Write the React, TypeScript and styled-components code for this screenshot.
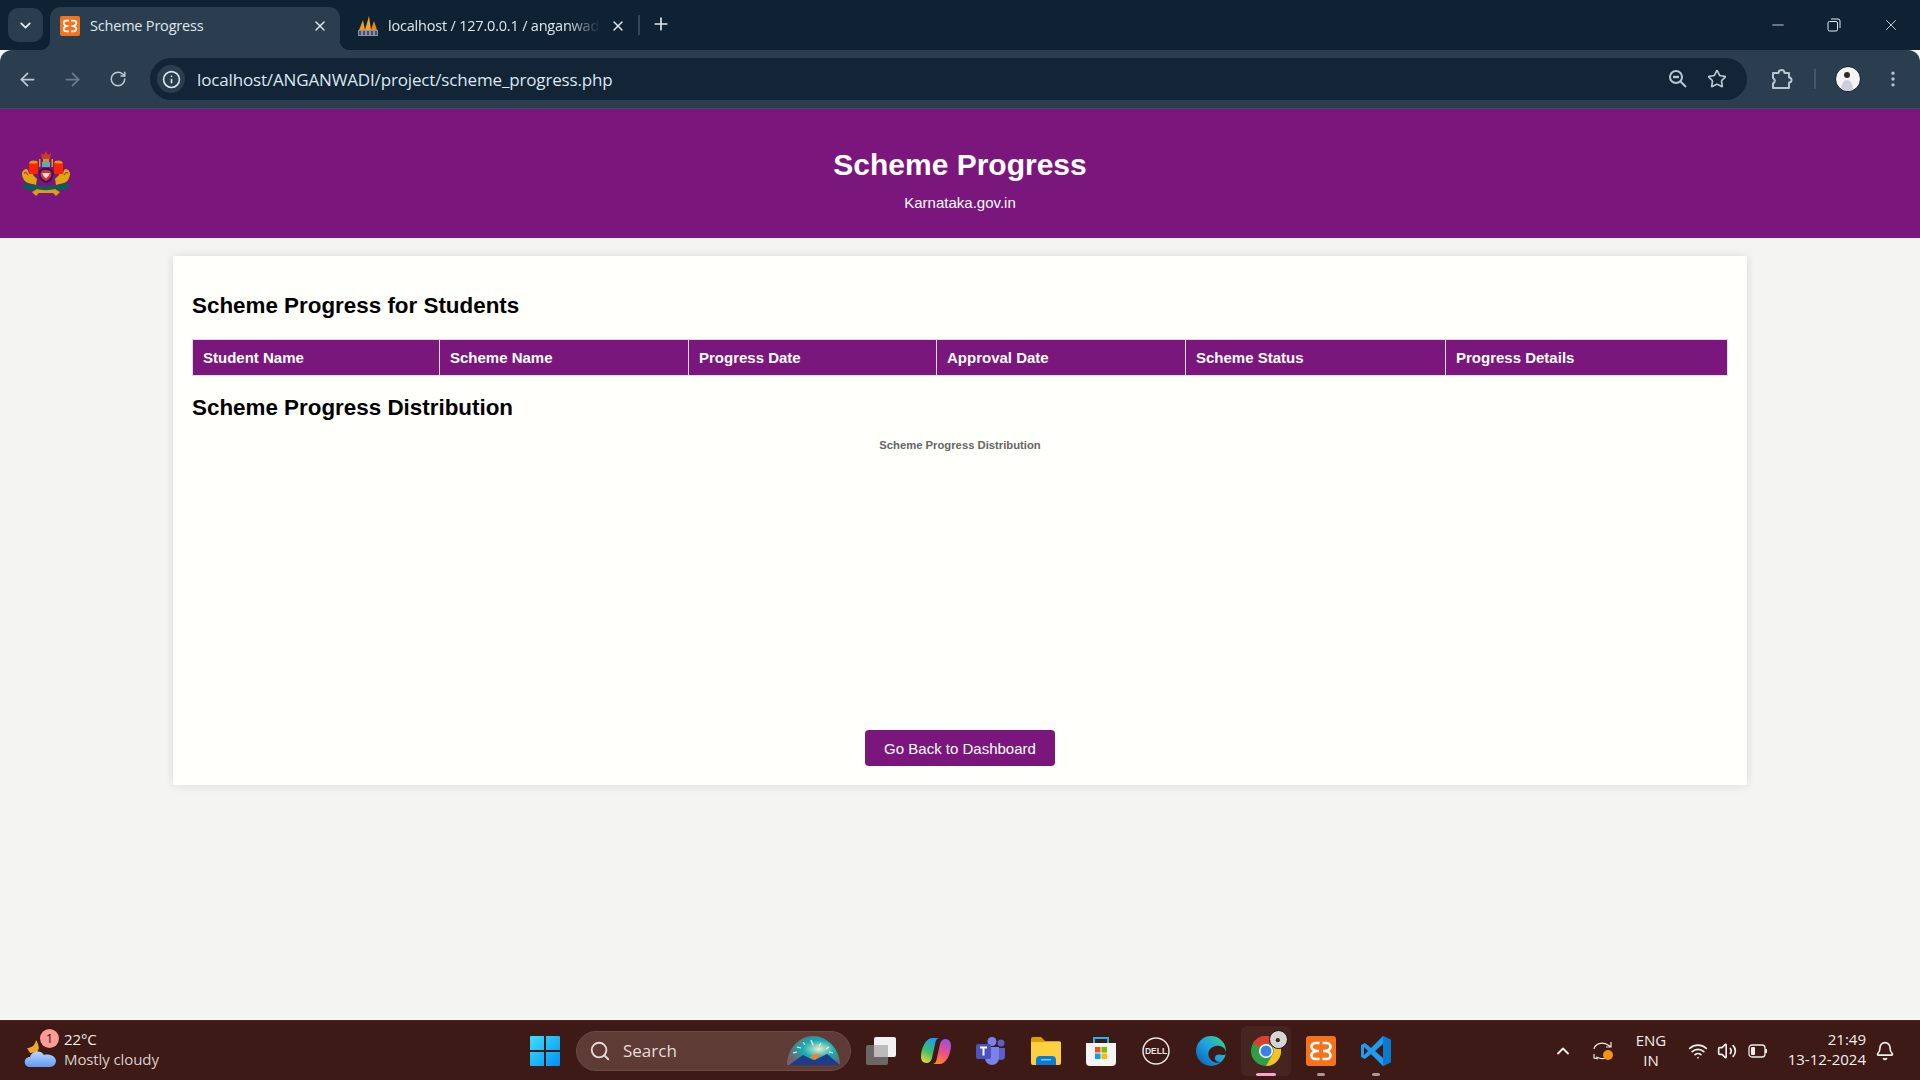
import React from "react";
import styled, { createGlobalStyle } from "styled-components";
import {
  ArrowLeft,
  ArrowRight,
  Bell,
  ChevronDown,
  ChevronUp,
  EllipsisVertical,
  Info,
  Minus,
  Plus,
  RotateCw,
  Search,
  Star,
  Volume2,
  Wifi,
  X,
} from "lucide-react";

const purple = "#7b167c";

const GlobalStyle = createGlobalStyle`
  html, body {
    margin: 0;
    padding: 0;
    height: 100%;
    overflow: hidden;
    background: #f4f4f2;
  }
  #root {
    height: 100%;
  }
`;

const Screen = styled.div`
  width: 1920px;
  height: 1080px;
  display: flex;
  flex-direction: column;
  font-family: "Liberation Sans", Arial, sans-serif;
`;

/* browser chrome */
const TabStrip = styled.div`
  height: 50px;
  flex: none;
  background: #0f2233;
  display: flex;
  align-items: flex-end;
  padding-left: 8px;
  font-family: "Open Sans", "Noto Sans", sans-serif;
  color: #dfe6ec;
`;

const TabMenu = styled.div`
  width: 35px;
  height: 34px;
  margin-bottom: 8px;
  margin-right: 7px;
  border-radius: 10px;
  background: #2b3e4f;
  display: flex;
  align-items: center;
  justify-content: center;
  color: #e3e9ee;
`;

const Tab = styled.div<{ $active?: boolean }>`
  position: relative;
  width: ${(p) => (p.$active ? "290px" : "298px")};
  height: 43px;
  flex: none;
  box-sizing: border-box;
  padding: 0 12px 6px ${(p) => (p.$active ? "10px" : "18px")};
  border-radius: 11px 11px 0 0;
  background: ${(p) => (p.$active ? "#2b3e4f" : "transparent")};
  display: flex;
  align-items: center;
  gap: 10px;
  font-size: 14.5px;
  letter-spacing: -0.2px;
  ${(p) =>
    p.$active &&
    `
    &::after {
      content: "";
      position: absolute;
      right: -10px;
      bottom: 0;
      width: 10px;
      height: 10px;
      background: radial-gradient(circle at 100% 0, transparent 10px, #2b3e4f 10.5px);
    }
    &::before {
      content: "";
      position: absolute;
      left: -10px;
      bottom: 0;
      width: 10px;
      height: 10px;
      background: radial-gradient(circle at 0 0, transparent 10px, #2b3e4f 10.5px);
    }
  `}
`;

const TabTitle = styled.span<{ $fade?: boolean }>`
  flex: 1;
  white-space: nowrap;
  overflow: hidden;
  ${(p) =>
    p.$fade &&
    `
    -webkit-mask-image: linear-gradient(90deg, #000 85%, transparent 100%);
    mask-image: linear-gradient(90deg, #000 85%, transparent 100%);
  `}
`;

const TabSeparator = styled.div`
  width: 2px;
  height: 20px;
  margin: 0 11px 15px 0;
  background: #33475a;
`;

const NewTab = styled.div`
  height: 36px;
  display: flex;
  align-items: flex-start;
  color: #dfe6ec;
`;

const WindowButtons = styled.div`
  margin-left: auto;
  height: 50px;
  display: flex;
  align-items: center;
  color: #e6ebef;
`;

const WindowButton = styled.div<{ $w?: number }>`
  width: ${(p) => p.$w ?? 56}px;
  display: flex;
  justify-content: center;
`;

const Toolbar = styled.div`
  height: 59px;
  flex: none;
  box-sizing: border-box;
  border-bottom: 1px solid #3c5058;
  background: #2b3e4f;
  border-radius: 12px 12px 0 0;
  display: flex;
  align-items: center;
  padding-left: 5px;
  color: #b9c6d2;
`;

const NavButton = styled.div<{ $dim?: boolean }>`
  width: 45px;
  display: flex;
  justify-content: center;
  color: ${(p) => (p.$dim ? "#6d7d8b" : "#bcc9d4")};
`;

const AddressBar = styled.div`
  margin-left: 10px;
  width: 1597px;
  height: 42px;
  border-radius: 21px;
  background: #122435;
  display: flex;
  align-items: center;
  padding: 0 20px 0 7px;
  box-sizing: border-box;
  gap: 12px;
`;

const InfoChip = styled.div`
  width: 28px;
  height: 28px;
  border-radius: 50%;
  background: #2b3e4f;
  display: flex;
  align-items: center;
  justify-content: center;
  color: #dfe6ec;
`;

const Url = styled.div`
  flex: 1;
  font-family: "Open Sans", "Noto Sans", sans-serif;
  font-size: 17px;
  letter-spacing: -0.15px;
  color: #dbe7f2;
`;

const AddressIcons = styled.div`
  display: flex;
  align-items: center;
  gap: 19px;
  color: #b9c6d2;
`;

const ToolbarEnd = styled.div`
  flex: 1;
  display: flex;
  align-items: center;
  color: #b9c6d2;
  padding-left: 24px;
`;

const ToolDivider = styled.div`
  width: 2px;
  height: 20px;
  margin: 0 19px 0 21px;
  background: #44576a;
`;

const Avatar = styled.div`
  width: 24px;
  height: 24px;
  margin-right: 22px;
  border-radius: 50%;
  border: 1px solid #0b1520;
  background: #f4f4f4;
  overflow: hidden;
  display: flex;
`;

/* the page itself */
const Page = styled.main`
  flex: 1;
  min-height: 0;
  background: #f4f4f2;
  display: flex;
  flex-direction: column;
`;

const Banner = styled.header`
  height: 129px;
  flex: none;
  box-sizing: border-box;
  background: ${purple};
  color: #fff;
  display: grid;
  grid-template-columns: 1fr auto 1fr;
  align-items: center;
  padding: 0 21px;
`;

const BannerText = styled.div`
  text-align: center;
  padding-top: 12px;
`;

const BannerTitle = styled.h1`
  margin: 0;
  font-size: 30px;
  line-height: 35px;
  font-weight: bold;
`;

const BannerSub = styled.p`
  margin: 12px 0 0;
  font-size: 15px;
  line-height: 18px;
`;

const Card = styled.section`
  width: 1574px;
  height: 529px;
  box-sizing: border-box;
  margin: 18px auto 0;
  padding: 36px 19px 19px;
  background: #fffffc;
  box-shadow: 0 0 10px rgba(0, 0, 0, 0.1);
  display: flex;
  flex-direction: column;
`;

const SectionTitle = styled.h2`
  margin: 0;
  font-size: 22.4px;
  line-height: 28px;
  font-weight: bold;
  color: #000;
`;

const Table = styled.table`
  width: 1535px;
  margin: 19px 0 18px;
  border-collapse: collapse;
  table-layout: fixed;
`;

const Th = styled.th<{ $w: number }>`
  width: ${(p) => p.$w}px;
  height: 36px;
  box-sizing: border-box;
  padding: 0 9px 0 10px;
  border: 1px solid #ddd;
  background: ${purple};
  color: #fff;
  font-size: 15px;
  font-weight: bold;
  text-align: left;
`;

const ChartBox = styled.div`
  flex: 1;
  padding-top: 17px;
  text-align: center;
  color: #666;
  font-size: 11.25px;
  font-weight: bold;
`;

const BackButton = styled.button`
  align-self: center;
  width: 190px;
  height: 36px;
  padding: 1px 0 0;
  border: 0;
  border-radius: 4px;
  background: ${purple};
  color: #fff;
  font-family: "Liberation Sans", Arial, sans-serif;
  font-size: 15px;
`;

/* windows taskbar */
const Taskbar = styled.footer`
  height: 60px;
  flex: none;
  box-sizing: border-box;
  border-top: 1px solid #4b2a26;
  background: #3d1a15;
  display: grid;
  grid-template-columns: 520px 1fr 380px;
  align-items: center;
  color: #f4eeec;
  font-family: "Open Sans", "Noto Sans", sans-serif;
`;

const Weather = styled.div`
  display: flex;
  align-items: center;
  gap: 8px;
  padding-left: 24px;
`;

const WeatherIcon = styled.div`
  position: relative;
  width: 32px;
  height: 36px;
`;

const WeatherBadge = styled.div`
  position: absolute;
  top: -4px;
  left: 16px;
  width: 19px;
  height: 19px;
  border-radius: 50%;
  background: #ff9a94;
  color: #301010;
  font-size: 13px;
  line-height: 19px;
  text-align: center;
`;

const WeatherText = styled.div`
  font-size: 15px;
  line-height: 20px;
  letter-spacing: -0.1px;
  margin-top: -4px;
`;

const WeatherSub = styled.div`
  color: #d9cfcc;
`;

const TaskCenter = styled.div`
  display: flex;
  align-items: center;
`;

const TaskCell = styled.div<{ $active?: boolean }>`
  position: relative;
  width: 50px;
  height: 50px;
  margin-right: 5px;
  border-radius: 6px;
  display: flex;
  align-items: center;
  justify-content: center;
  background: ${(p) => (p.$active ? "rgba(255,255,255,0.05)" : "transparent")};
`;

const RunDot = styled.div<{ $active?: boolean }>`
  position: absolute;
  bottom: 0;
  left: 50%;
  transform: translateX(-50%);
  height: 3px;
  width: ${(p) => (p.$active ? "20px" : "8px")};
  border-radius: 2px;
  background: ${(p) => (p.$active ? "#f7a3d3" : "#a89a96")};
`;

const ProfileBadge = styled.div`
  position: absolute;
  top: 4px;
  right: 3px;
  width: 19px;
  height: 19px;
  box-sizing: border-box;
  border: 1.5px solid #1c0f0c;
  border-radius: 50%;
  background: #d8d6d4;
  overflow: hidden;
  display: flex;
`;

const SearchPill = styled.div`
  width: 275px;
  height: 40px;
  flex: none;
  box-sizing: border-box;
  margin-left: 1px;
  margin-right: 5px;
  border-radius: 20px;
  background: #5e3c35;
  border: 1px solid #6c4b44;
  display: flex;
  align-items: center;
  gap: 12px;
  padding-left: 12px;
  padding-right: 8px;
  color: #e5dbd8;
  font-size: 17px;
`;

const SearchWord = styled.span`
  flex: 1;
`;

const Tray = styled.div`
  display: flex;
  align-items: center;
  height: 100%;
  padding-left: 8px;
  font-size: 15px;
`;

const TrayIcon = styled.div<{ $w: number }>`
  width: ${(p) => p.$w}px;
  flex: none;
  display: flex;
  justify-content: center;
`;

const Lang = styled.div`
  width: 46px;
  flex: none;
  margin-right: 10px;
  margin-top: -2px;
  text-align: center;
  line-height: 20px;
`;

const Clock = styled.div`
  width: 92px;
  flex: none;
  margin-top: -4px;
  text-align: right;
  line-height: 20px;
  white-space: nowrap;
`;

/* brand drawings */
const XamppIcon = ({ size }: { size: number }) => (
  <svg width={size} height={size} viewBox="0 0 30 30">
    <rect width="30" height="30" rx="3" fill="#f4731c" />
    <g fill="none" stroke="#fff" strokeWidth="2.600" strokeLinejoin="round">
      <path d="M13.500 7H9.500C7 7 5.500 8.800 5.500 10.800 5.500 12.700 7.500 14.200 10 15 7.500 15.800 5.500 17.300 5.500 19.200 5.500 21.200 7 23 9.500 23H13.500" />
      <path d="M16.500 7H20.500C23 7 24.500 8.800 24.500 10.800 24.500 12.700 22.500 14.200 20 15 22.500 15.800 24.500 17.300 24.500 19.200 24.500 21.200 23 23 20.500 23H16.500" />
      <path d="M10 15H13M17 15H20" />
    </g>
  </svg>
);

const PmaIcon = () => (
  <svg width="20" height="22" viewBox="0 0 20 22">
    <path d="M1 15 5 5l2 10z" fill="#f29a1f" />
    <path d="M7 15 11 1l2 14z" fill="#f6a623" />
    <path d="M13 15l3-9 3 9z" fill="#e8891a" />
    <rect x="0" y="15" width="20" height="6" fill="#8d8fa8" />
    <path d="M2 16v4M6 16v4M10 16v4M14 16v4M18 16v4" stroke="#2b3a55" strokeWidth="1.500" />
  </svg>
);

const Emblem = () => (
  <svg width="50" height="46" viewBox="0 0 50 46">
    {/* crown and neck */}
    <path d="M20 2l3 2 2-4 2 4 3-2-1 6H21z" fill="#d23c1c" />
    <rect x="22" y="8" width="6" height="3" fill="#b89a3e" />
    <rect x="21" y="11" width="8" height="5" fill="#64a6b4" />
    {/* red panels */}
    <rect x="8" y="12" width="9" height="11" fill="#ff2200" />
    <rect x="33" y="12" width="9" height="11" fill="#ff2200" />
    {/* lions */}
    <path d="M8 12c1-3 5-3 8-2l1 2-3 .5H9z" fill="#d99f10" />
    <path d="M42 12c-1-3-5-3-8-2l-1 2 3 .5h5z" fill="#d99f10" />
    <path d="M18 13V8h1.500v8H18z" fill="#d99f10" />
    <path d="M32 13V8h-1.500v8H32z" fill="#d99f10" />
    <path d="M5 18c-4 1-5 5-3 9 1 2 2 4 5 5l8 2 1-6-4-4v-1H8c-.5-3-1-5-3-5z" fill="#e0a60d" />
    <path d="M45 18c4 1 5 5 3 9-1 2-2 4-5 5l-8 2-1-6 4-4v-1h4c.5-3 1-5 3-5z" fill="#e0a60d" />
    <path d="M3 22c2-1 3 0 4 2" fill="none" stroke="#7b167c" strokeWidth="1" />
    <path d="M47 22c-2-1-3 0-4 2" fill="none" stroke="#7b167c" strokeWidth="1" />
    {/* shield */}
    <path d="M25 17c5 0 7.500 2 7.500 5.500 0 5.500-3.500 8.500-7.500 9.500-4-1-7.500-4-7.500-9.500C17.500 19 20 17 25 17z" fill="#2a1060" />
    <path d="M25 19c3.500 0 5.500 1 5.500 3.500 0 4-2.500 6-5.500 7.500-3-1.500-5.500-3.500-5.500-7.500 0-2.500 2-3.500 5.500-3.500z" fill="#e62a2a" />
    <path d="M21 22h8l-1.500 3-2.500 2.500-2.500-2.500z" fill="#f1dede" />
    {/* base and ribbon */}
    <path d="M1 34c4-3 8-1 13 0 4 .8 7 1 11 1s7-.2 11-1c5-1 9-3 13 0-1 4-6 6-12 5H13C7 40 2 38 1 34z" fill="#0f5a5a" />
    <path d="M11 41l5-3c5 1.500 13 1.500 18 0l5 3-4 4-3-3H18l-3 3z" fill="#d99f10" />
  </svg>
);

const WindowsLogo = () => (
  <svg width="30" height="30" viewBox="0 0 30 30">
    <defs>
      <linearGradient id="win" x1="0" y1="0" x2="1" y2="1">
        <stop offset="0" stopColor="#3fe0fb" />
        <stop offset="1" stopColor="#0090f5" />
      </linearGradient>
    </defs>
    <path d="M0 1a1 1 0 0 1 1-1h13v14H0zM16 0h13a1 1 0 0 1 1 1v13H16zM0 16h14v14H1a1 1 0 0 1-1-1zM16 16h14v13a1 1 0 0 1-1 1H16z" fill="url(#win)" />
  </svg>
);

const SearchArt = () => (
  <svg width="57" height="31" viewBox="0 0 57 31">
    <defs>
      <radialGradient id="glow" cx="0.6" cy="0.45" r="0.6">
        <stop offset="0" stopColor="#f4e9c4" />
        <stop offset="0.5" stopColor="#12aeb4" />
        <stop offset="1" stopColor="#75626a" />
      </radialGradient>
    </defs>
    <path d="M2 30C2 14 14 1 28 1s27 13 27 29z" fill="url(#glow)" />
    <path d="M4 30l14-10 10 5 4-1 10-5 13 11z" fill="#1c3c8c" />
    <path d="M24 22l7-3 5 1-6 5z" fill="#f0803a" />
    <path d="M12 12l4 1M18 7l2 3M26 5l2 5M36 8l-2 3M44 12l-3 2M8 18l4-1M48 18l-4-1" stroke="#fff" strokeWidth="1.200" />
  </svg>
);

const TaskViewIcon = () => (
  <svg width="32" height="28" viewBox="0 0 32 28">
    <rect x="1" y="8" width="22" height="20" rx="2" fill="#6b6765" />
    <rect x="9" y="0" width="22" height="20" rx="2" fill="#f2f2f2" />
    <rect x="9" y="8" width="14" height="12" fill="#bdbbb9" />
  </svg>
);

const CopilotIcon = () => (
  <svg width="30" height="30" viewBox="0 0 30 30">
    <defs>
      <linearGradient id="co1" x1="0.6" y1="0" x2="0.2" y2="1">
        <stop offset="0" stopColor="#1f9df0" />
        <stop offset="0.55" stopColor="#3cc06a" />
        <stop offset="1" stopColor="#f0d33a" />
      </linearGradient>
      <linearGradient id="co2" x1="0.7" y1="0" x2="0.3" y2="1">
        <stop offset="0" stopColor="#9a4fe8" />
        <stop offset="0.55" stopColor="#f0527f" />
        <stop offset="1" stopColor="#ff8a2b" />
      </linearGradient>
    </defs>
    <path d="M11 2H19C16 2 15 4 14.500 6L11 22C10.500 25 8 27 5.500 27 2 27 0 24 0 21 0 12 5 2 11 2Z" fill="url(#co1)" />
    <path d="M19 28H11C14 28 15 26 15.500 24L19 8C19.500 5 22 3 24.500 3 28 3 30 6 30 9 30 18 25 28 19 28Z" fill="url(#co2)" />
  </svg>
);

const TeamsIcon = () => (
  <svg width="30" height="28" viewBox="0 0 30 28">
    <circle cx="25" cy="6" r="3.500" fill="#5b5fc7" />
    <path d="M21 11h8v8a4 4 0 0 1-8 0z" fill="#5b5fc7" />
    <circle cx="16" cy="4.500" r="4.500" fill="#7b83eb" />
    <path d="M9 10h14v11a7 7 0 0 1-14 0z" fill="#7b83eb" />
    <rect x="0" y="7" width="15" height="15" rx="2" fill="#4b53bc" />
    <path d="M4 10.500h7M7.500 10.500v8" stroke="#fff" strokeWidth="2" />
  </svg>
);

const FolderIcon = () => (
  <svg width="30" height="28" viewBox="0 0 30 28">
    <path d="M0 2a2 2 0 0 1 2-2h8l4 4h14a2 2 0 0 1 2 2v4H0z" fill="#d9a100" />
    <path d="M0 5h30v21a2 2 0 0 1-2 2H2a2 2 0 0 1-2-2z" fill="#fcd03f" />
    <path d="M5 28v-5a4 4 0 0 1 4-4h12a4 4 0 0 1 4 4v5z" fill="#0a7cd6" />
    <rect x="10" y="22" width="10" height="1.500" fill="#7fc4f4" />
  </svg>
);

const StoreIcon = () => (
  <svg width="30" height="30" viewBox="0 0 30 30">
    <path d="M8 8V2h14v6" fill="none" stroke="#22b7ec" strokeWidth="2" />
    <path d="M0 7h30v19a4 4 0 0 1-4 4H4a4 4 0 0 1-4-4z" fill="#f4f4f4" />
    <rect x="9" y="11" width="5.500" height="5.500" fill="#f25022" />
    <rect x="15.500" y="11" width="5.500" height="5.500" fill="#7fba00" />
    <rect x="9" y="17.500" width="5.500" height="5.500" fill="#00a4ef" />
    <rect x="15.500" y="17.500" width="5.500" height="5.500" fill="#ffb900" />
  </svg>
);

const DellIcon = () => (
  <svg width="28" height="28" viewBox="0 0 28 28">
    <circle cx="14" cy="14" r="13" fill="none" stroke="#e9e3e1" strokeWidth="1.500" />
    <text
      x="14"
      y="17"
      textAnchor="middle"
      fontSize="8.500"
      fontWeight="bold"
      fill="#e9e3e1"
      fontFamily="Liberation Sans, sans-serif"
    >
      DELL
    </text>
  </svg>
);

const EdgeIcon = () => (
  <svg width="30" height="30" viewBox="0 0 30 30">
    <defs>
      <linearGradient id="edge" x1="0" y1="1" x2="1" y2="0">
        <stop offset="0" stopColor="#0c59a4" />
        <stop offset="0.5" stopColor="#1ba0e2" />
        <stop offset="1" stopColor="#40d77a" />
      </linearGradient>
    </defs>
    <circle cx="15" cy="15" r="15" fill="url(#edge)" />
    <path d="M30 17c0-5-5-8-10-7-6 1-9 6-7 11 2 5 8 7 13 5-5 1-8-2-7-5 1-3 5-3 7-2 2 0 4 0 4-2z" fill="#3d1a15" />
  </svg>
);

const ChromeIcon = () => (
  <svg width="30" height="30" viewBox="0 0 30 30">
    <circle cx="15" cy="15" r="15" fill="#2f9e44" />
    <path d="M15 0a15 15 0 0 1 13 7.500H15a7.500 7.500 0 0 0-6.500 3.750L2 7a15 15 0 0 1 13-7z" fill="#e33b2e" />
    <path d="M28 7.500A15 15 0 0 1 15 30l6.500-11.250A7.500 7.500 0 0 0 21.500 11z" fill="#f6c026" />
    <circle cx="15" cy="15" r="7" fill="#fff" />
    <circle cx="15" cy="15" r="5.500" fill="#3f7fe8" />
  </svg>
);

const CodeIcon = () => (
  <svg width="30" height="30" viewBox="0 0 30 30">
    <path d="M22 0l8 4v22l-8 4-12-12-6 5-4-2V9l4-2 6 5z" fill="#1f9cf0" />
    <path d="M22 8l-8 7 8 7z" fill="#3d1a15" />
    <path d="M3 11l4 4-4 4z" fill="#3d1a15" />
    <path d="M22 0l8 4v22l-8 4z" fill="#0a7ad1" />
  </svg>
);

const CloudIcon = () => (
  <svg width="32" height="36" viewBox="0 0 32 36">
    <defs>
      <linearGradient id="cloud" x1="0" y1="0" x2="0" y2="1">
        <stop offset="0" stopColor="#b9d6ff" />
        <stop offset="1" stopColor="#5f9bf2" />
      </linearGradient>
    </defs>
    <path d="M3 15c4 0 8-2 9-8 3 5 4 9 1 12l-7 1z" fill="#f4a62a" />
    <path d="M6 34c-7 0-7-10 0-10 1-6 11-8 14-2 8-2 12 3 12 6s-3 6-6 6z" fill="url(#cloud)" />
  </svg>
);

const SyncIcon = () => (
  <svg width="22" height="22" viewBox="0 0 22 22" fill="none" stroke="#f2ecea" strokeWidth="1.200">
    <path d="M2 9c1-5 8-8 14-4l3 2M19 2v5h-5" />
    <path d="M4 17l3 1c3 1 5 1 7 0M2 14v4l4 1" />
    <circle cx="16" cy="15" r="5" fill="#f7930e" stroke="none" />
  </svg>
);

const BatteryIcon = () => (
  <svg width="20" height="14" viewBox="0 0 20 14" fill="none">
    <rect x="1" y="1" width="16" height="12" rx="3" stroke="#f2ecea" strokeWidth="1.300" />
    <rect x="3" y="3" width="4" height="8" rx="1" fill="#f2ecea" />
    <path d="M18 5v4" stroke="#f2ecea" strokeWidth="2" />
  </svg>
);

const RestoreIcon = () => (
  <svg width="14" height="14" viewBox="0 0 14 14" fill="none" stroke="#e6ebef" strokeWidth="1">
    <rect x="1" y="3.500" width="9.500" height="9.500" rx="1.500" />
    <path d="M4 1h7a2 2 0 0 1 2 2v7" />
  </svg>
);

const ZoomGlass = () => (
  <svg width="20" height="20" viewBox="0 0 20 20" fill="none" stroke="#b9c6d2">
    <circle cx="8" cy="8" r="6" strokeWidth="2" />
    <path d="M12.500 12.500 18 18" strokeWidth="2" />
    <path d="M5 8h6" strokeWidth="2.400" />
  </svg>
);

const PuzzlePiece = () => (
  <svg width="22" height="22" viewBox="0 0 22 22" fill="none" stroke="#b9c6d2" strokeWidth="2" strokeLinejoin="round">
    <path d="M2 5h5.500a3 3 0 0 1 6 0H18v4.500a2.500 2.500 0 0 1 0 5V20H2v-4.500a3 3 0 0 0 0-5.500z" />
  </svg>
);

const AvatarArt = () => (
  <svg width="24" height="24" viewBox="0 0 24 24">
    <circle cx="11" cy="8" r="3" fill="#3a2a20" />
    <path d="M5 24c0-8 3-11 6-11s6 3 6 11z" fill="#c9d0da" />
  </svg>
);

const columns = [
  { label: "Student Name", w: 247 },
  { label: "Scheme Name", w: 249 },
  { label: "Progress Date", w: 248 },
  { label: "Approval Date", w: 249 },
  { label: "Scheme Status", w: 260 },
  { label: "Progress Details", w: 282 },
];

export default function App() {
  return (
    <Screen>
      <GlobalStyle />
      <TabStrip>
        <TabMenu>
          <ChevronDown size={17} strokeWidth={2.5} />
        </TabMenu>
        <Tab $active>
          <XamppIcon size={20} />
          <TabTitle>Scheme Progress</TabTitle>
          <X size={16} strokeWidth={2.2} />
        </Tab>
        <Tab>
          <PmaIcon />
          <TabTitle $fade>localhost / 127.0.0.1 / anganwadi</TabTitle>
          <X size={16} strokeWidth={2.2} />
        </Tab>
        <TabSeparator />
        <NewTab>
          <Plus size={20} strokeWidth={2} />
        </NewTab>
        <WindowButtons>
          <WindowButton>
            <Minus size={18} strokeWidth={1.1} />
          </WindowButton>
          <WindowButton>
            <RestoreIcon />
          </WindowButton>
          <WindowButton $w={58}>
            <X size={18} strokeWidth={1.1} />
          </WindowButton>
        </WindowButtons>
      </TabStrip>

      <Toolbar>
        <NavButton>
          <ArrowLeft size={21} />
        </NavButton>
        <NavButton $dim>
          <ArrowRight size={21} />
        </NavButton>
        <NavButton>
          <RotateCw size={18} />
        </NavButton>
        <AddressBar>
          <InfoChip>
            <Info size={19} />
          </InfoChip>
          <Url>localhost/ANGANWADI/project/scheme_progress.php</Url>
          <AddressIcons>
            <ZoomGlass />
            <Star size={20} />
          </AddressIcons>
        </AddressBar>
        <ToolbarEnd>
          <PuzzlePiece />
          <ToolDivider />
          <Avatar>
            <AvatarArt />
          </Avatar>
          <EllipsisVertical size={20} />
        </ToolbarEnd>
      </Toolbar>

      <Page>
        <Banner>
          <Emblem />
          <BannerText>
            <BannerTitle>Scheme Progress</BannerTitle>
            <BannerSub>Karnataka.gov.in</BannerSub>
          </BannerText>
        </Banner>
        <Card>
          <SectionTitle>Scheme Progress for Students</SectionTitle>
          <Table>
            <thead>
              <tr>
                {columns.map((c) => (
                  <Th key={c.label} $w={c.w}>
                    {c.label}
                  </Th>
                ))}
              </tr>
            </thead>
          </Table>
          <SectionTitle>Scheme Progress Distribution</SectionTitle>
          <ChartBox>Scheme Progress Distribution</ChartBox>
          <BackButton>Go Back to Dashboard</BackButton>
        </Card>
      </Page>

      <Taskbar>
        <Weather>
          <WeatherIcon>
            <CloudIcon />
            <WeatherBadge>1</WeatherBadge>
          </WeatherIcon>
          <WeatherText>
            22°C
            <WeatherSub>Mostly cloudy</WeatherSub>
          </WeatherText>
        </Weather>
        <TaskCenter>
          <TaskCell>
            <WindowsLogo />
          </TaskCell>
          <SearchPill>
            <Search size={22} strokeWidth={2} />
            <SearchWord>Search</SearchWord>
            <SearchArt />
          </SearchPill>
          <TaskCell>
            <TaskViewIcon />
          </TaskCell>
          <TaskCell>
            <CopilotIcon />
          </TaskCell>
          <TaskCell>
            <TeamsIcon />
          </TaskCell>
          <TaskCell>
            <FolderIcon />
          </TaskCell>
          <TaskCell>
            <StoreIcon />
          </TaskCell>
          <TaskCell>
            <DellIcon />
          </TaskCell>
          <TaskCell>
            <EdgeIcon />
          </TaskCell>
          <TaskCell $active>
            <ChromeIcon />
            <ProfileBadge>
              <AvatarArt />
            </ProfileBadge>
            <RunDot $active />
          </TaskCell>
          <TaskCell>
            <XamppIcon size={30} />
            <RunDot />
          </TaskCell>
          <TaskCell>
            <CodeIcon />
            <RunDot />
          </TaskCell>
        </TaskCenter>
        <Tray>
          <TrayIcon $w={30}>
            <ChevronUp size={20} strokeWidth={2.2} />
          </TrayIcon>
          <TrayIcon $w={50}>
            <SyncIcon />
          </TrayIcon>
          <Lang>
            ENG
            <br />
            IN
          </Lang>
          <TrayIcon $w={28}>
            <Wifi size={20} />
          </TrayIcon>
          <TrayIcon $w={30}>
            <Volume2 size={20} />
          </TrayIcon>
          <TrayIcon $w={32}>
            <BatteryIcon />
          </TrayIcon>
          <Clock>
            21:49
            <br />
            13-12-2024
          </Clock>
          <TrayIcon $w={38}>
            <Bell size={20} />
          </TrayIcon>
        </Tray>
      </Taskbar>
    </Screen>
  );
}
